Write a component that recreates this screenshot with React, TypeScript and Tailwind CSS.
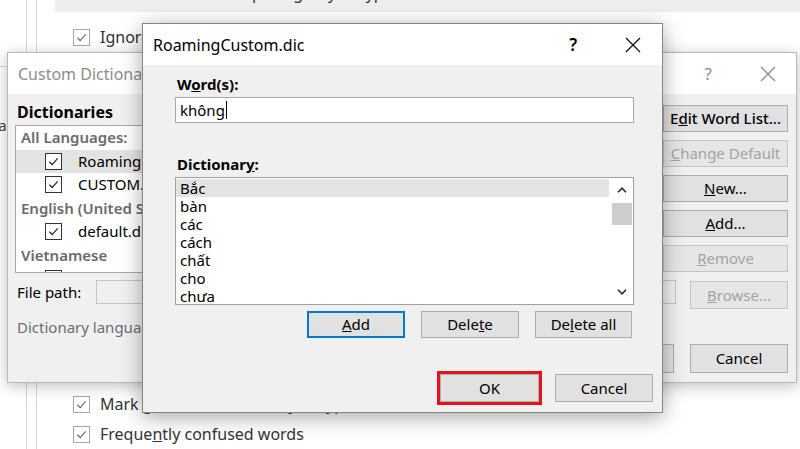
import React from 'react';
import clsx from 'clsx';

const ChevronUp = () => (
  <svg viewBox="0 0 10 6" className="h-[6px] w-[10px]">
    <path d="M1 5.2 L5 1.2 L9 5.2" fill="none" stroke="#2b2b2b" strokeWidth="1.6" />
  </svg>
);

const ChevronDown = () => (
  <svg viewBox="0 0 10 6" className="h-[6px] w-[10px]">
    <path d="M1 0.8 L5 4.8 L9 0.8" fill="none" stroke="#2b2b2b" strokeWidth="1.6" />
  </svg>
);

const CloseX = ({ color }: { color: string }) => (
  <svg viewBox="0 0 16 16" className="h-[16px] w-[16px]">
    <path d="M1 1 L15 15 M15 1 L1 15" fill="none" stroke={color} strokeWidth="1.3" />
  </svg>
);

const Check = ({ muted }: { muted?: boolean }) => (
  <span
    className={clsx(
      'flex h-[17px] w-[17px] shrink-0 items-center justify-center border bg-white',
      muted ? 'border-[#a6a6a6]' : 'border-[#333333]'
    )}
  >
    <svg viewBox="0 0 12 12" className="h-[11px] w-[11px]">
      <path d="M1.5 6.3 L4.6 9.3 L10.5 2.6" fill="none" stroke={muted ? '#6f6f6f' : '#222'} strokeWidth="1.3" />
    </svg>
  </span>
);

type BtnProps = {
  children: React.ReactNode;
  disabled?: boolean;
  focused?: boolean;
  className?: string;
};

const Btn = ({ children, disabled, focused, className }: BtnProps) => (
  <div
    className={clsx(
      'flex items-center justify-center bg-[#e1e1e1] text-[15px]',
      focused ? 'border-2 border-[#0078d7]' : 'border',
      !focused && (disabled ? 'border-[#c4c4c4]' : 'border-[#adadad]'),
      disabled ? 'bg-[#e6e6e6] text-[#a3a3a3]' : 'text-black',
      className
    )}
  >
    {children}
  </div>
);

const words = ['Bắc', 'bàn', 'các', 'cách', 'chất', 'cho', 'chưa'];

// list of the dialog underneath; most of it is hidden by the word list window
const BackList = () => (
  <div className="h-[148px] overflow-hidden border border-[#a8a8a8] bg-white text-[15px] leading-[23.5px]">
    <div className="pl-[5px] font-semibold text-[#6b6b6b]">All Languages:</div>
    <div className="flex h-[23.5px] items-center gap-[16px] bg-[#e3e3e3] pl-[29px]">
      <Check />
      <span className="text-black">RoamingCustom.dic</span>
    </div>
    <div className="flex h-[23.5px] items-center gap-[16px] pl-[29px]">
      <Check />
      <span className="text-black">CUSTOM.DIC</span>
    </div>
    <div className="pl-[5px] font-semibold text-[#6b6b6b]">English (United States)</div>
    <div className="flex h-[23.5px] items-center gap-[16px] pl-[29px]">
      <Check />
      <span className="text-black">default.dic</span>
    </div>
    <div className="pl-[5px] font-semibold text-[#6b6b6b]">Vietnamese</div>
    <div className="flex h-[23.5px] items-center gap-[16px] pl-[29px]">
      <Check />
      <span className="text-black">default.dic</span>
    </div>
  </div>
);

const CustomDictionaries = () => (
  <div className="absolute left-[7px] top-[52px] flex h-[331px] w-[790px] flex-col border border-[#b8b8b8] bg-[#f0f0f0] shadow-[0_3px_14px_rgba(0,0,0,0.25)]">
    <div className="flex h-[41px] shrink-0 items-center bg-white pl-[10px] pr-[20px]">
      <span className="text-[16px] text-[#8c8c8c]">Custom Dictionaries</span>
      <span className="ml-auto text-[17px] text-[#8c8c8c]">?</span>
      <span className="ml-[48px]">
        <CloseX color="#8c8c8c" />
      </span>
    </div>
    <div className="flex flex-1 flex-col pl-[7px] pr-[8px]">
      <div className="flex">
        <div className="flex-1 pr-[13px]">
          <div className="mt-[8px] pl-[2px] text-[16px] font-bold leading-[20px] text-black">Dictionaries</div>
          <div className="mt-[3px]">
            <BackList />
          </div>
        </div>
        <div className="mt-[11px] flex w-[125px] flex-col gap-[8px]">
          <Btn className="h-[27px] font-medium">
            E<u>d</u>it Word List...
          </Btn>
          <Btn className="h-[27px]" disabled>
            <u>C</u>hange Default
          </Btn>
          <Btn className="h-[27px]">
            <u>N</u>ew...
          </Btn>
          <Btn className="h-[27px]">
            <u>A</u>dd...
          </Btn>
          <Btn className="h-[27px]" disabled>
            <u>R</u>emove
          </Btn>
        </div>
      </div>
      <div className="mt-[7px] flex items-start">
        <span className="w-[81px] pl-[2px] text-[15px] leading-[24px] text-black">File path:</span>
        <div className="h-[24px] flex-1 border border-[#c4c4c4] bg-[#f0f0f0]" />
        <Btn className="ml-[14px] mt-[1px] h-[28px] w-[98px]" disabled>
          <u>B</u>rowse...
        </Btn>
      </div>
      <div className="mt-[8px] pl-[2px] text-[15px] leading-[20px] text-[#6d6d6d]">
        Dictionary lan<u>g</u>uage:
      </div>
      <div className="mt-[7px] flex justify-end gap-[16px]">
        <Btn className="h-[29px] w-[98px]">OK</Btn>
        <Btn className="h-[29px] w-[98px]">Cancel</Btn>
      </div>
    </div>
  </div>
);

const WordListDialog = () => (
  <div className="absolute left-[142px] top-[23px] flex h-[390px] w-[521px] flex-col border border-[#858585] bg-[#f0f0f0] shadow-[0_4px_20px_rgba(0,0,0,0.35)]">
    <div className="flex h-[41px] shrink-0 items-center bg-white pl-[10px] pr-[21px]">
      <span className="text-[16px] text-black">RoamingCustom.dic</span>
      <span className="ml-auto text-[17px] font-semibold text-black">?</span>
      <span className="ml-[48px]">
        <CloseX color="#111" />
      </span>
    </div>
    <div className="flex flex-col pl-[32px] pr-[28px]">
      <div className="mt-[9px] pl-[2px] text-[15px] font-bold leading-[20px] text-black">
        W<u>o</u>rd(s):
      </div>
      <div className="mt-[3px] flex h-[26px] items-center border border-[#a8a8a8] bg-white pl-[4px] text-[15px] text-black">
        không
        <span className="ml-[1px] h-[18px] w-[1px] bg-black" />
      </div>
      <div className="mt-[31px] pl-[2px] text-[15px] font-bold leading-[20px] text-black">
        Dictionar<u>y</u>:
      </div>
      <div className="mt-[3px] flex h-[128px] border border-[#a0a0a0] bg-white">
        <div className="flex-1 overflow-hidden pt-[1px] text-[15px] leading-[18px] text-black">
          {words.map((w, i) => (
            <div key={w} className={clsx('pl-[4px]', i === 0 && 'bg-[#e3e3e3]')}>
              {w}
            </div>
          ))}
        </div>
        <div className="flex w-[24px] flex-col items-center pl-[2px]">
          <div className="flex h-[24px] items-center justify-center">
            <ChevronUp />
          </div>
          <div className="mt-[1px] h-[22px] w-[20px] bg-[#cdcdcd]" />
          <div className="flex-1" />
          <div className="flex h-[24px] items-center justify-center">
            <ChevronDown />
          </div>
        </div>
      </div>
      <div className="mt-[6px] flex justify-end gap-[16px] pr-[2px]">
        <Btn focused className="h-[27px] w-[98px]">
          <u>A</u>dd
        </Btn>
        <Btn className="h-[27px] w-[98px]">
          Dele<u>t</u>e
        </Btn>
        <Btn className="h-[27px] w-[97px]">
          De<u>l</u>ete all
        </Btn>
      </div>
    </div>
    <div className="mt-[33px] flex items-center justify-end gap-[13px] pr-[9px]">
      <div className="border-[3px] border-[#e5121b]">
        <Btn className="h-[28px] w-[99px]">OK</Btn>
      </div>
      <Btn className="h-[28px] w-[98px]">Cancel</Btn>
    </div>
  </div>
);

const OptionRow = ({ children }: { children: React.ReactNode }) => (
  <div className="flex h-[24px] items-center gap-[10px] pl-[36px] text-[16px] text-[#333]">
    <Check muted />
    <span>{children}</span>
  </div>
);

export default function App() {
  return (
    <div className="relative h-[449px] w-[800px] overflow-hidden bg-white font-['Noto_Sans',sans-serif]">
      <div className="flex h-full">
        <div className="w-[27px] shrink-0 overflow-hidden border-r border-[#d4d4d4]">
          <div className="mt-[66px] h-[1px] w-[6px] bg-[#d0d0d0]" />
          <div className="mt-[48px] -ml-[37px] whitespace-nowrap text-[15px] leading-[20px] text-[#444]">Media</div>
        </div>
        <div className="w-[10px] shrink-0 border-r border-[#d4d4d4]" />
        <div className="flex flex-1 flex-col">
          <div className="ml-[18px] h-[12px] shrink-0 overflow-hidden bg-[#eeeeee]">
            <div className="-mt-[19px] pl-[140px] text-[16px] leading-[24px] text-[#333]">Check spelling as you type</div>
          </div>
          <div className="mt-[13px] shrink-0">
            <OptionRow>Ignore words in UPPERCASE</OptionRow>
          </div>
          <div className="mt-[343px] shrink-0">
            <OptionRow>Mark grammar errors as you type</OptionRow>
          </div>
          <div className="mt-[6px] shrink-0">
            <OptionRow>
              Freque<u>n</u>tly confused words
            </OptionRow>
          </div>
        </div>
      </div>
      <CustomDictionaries />
      <WordListDialog />
    </div>
  );
}
